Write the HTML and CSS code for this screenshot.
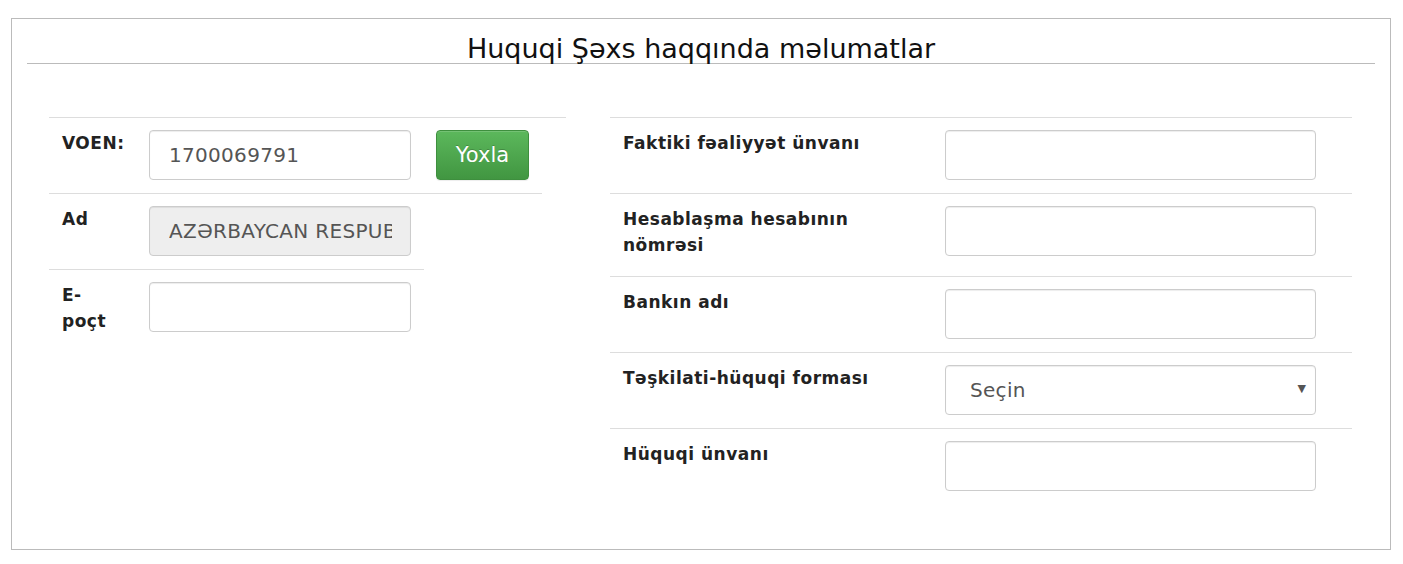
FILE: index.html
```html
<!DOCTYPE html>
<html>
<head>
  <meta charset="utf-8">
  <title>Huquqi Şəxs haqqında məlumatlar</title>
  <link rel="stylesheet" href="styles.css">
</head>
<body>
  <div class="panel">
    <h3 class="panel-title">Huquqi Şəxs haqqında məlumatlar</h3>

    <div class="columns">
      <!-- sol tərəf -->
      <div class="col-left">
        <div class="row row-line">
          <div class="cell label-cell"><label>VOEN:</label></div>
          <div class="cell"><input type="text" class="field" value="1700069791"></div>
          <div class="cell"><button type="button" class="btn-check">Yoxla</button></div>
        </div>
        <div class="row row-line">
          <div class="cell label-cell"><label>Ad</label></div>
          <div class="cell"><input type="text" class="field" value="AZƏRBAYCAN RESPUBLİKASI" disabled></div>
        </div>
        <div class="row">
          <div class="cell label-cell"><label>E-poçt</label></div>
          <div class="cell"><input type="text" class="field"></div>
        </div>
      </div>

      <!-- sağ tərəf -->
      <div class="col-right">
        <div class="rrow">
          <div class="rlabel"><label>Faktiki fəaliyyət ünvanı</label></div>
          <div class="rcell"><input type="text" class="field wide"></div>
        </div>
        <div class="rrow">
          <div class="rlabel"><label>Hesablaşma hesabının nömrəsi</label></div>
          <div class="rcell"><input type="text" class="field wide"></div>
        </div>
        <div class="rrow">
          <div class="rlabel"><label>Bankın adı</label></div>
          <div class="rcell"><input type="text" class="field wide"></div>
        </div>
        <div class="rrow">
          <div class="rlabel"><label>Təşkilati-hüquqi forması</label></div>
          <div class="rcell">
            <div class="select-wrap">
              <select class="field wide select">
                <option>Seçin</option>
              </select>
            </div>
          </div>
        </div>
        <div class="rrow">
          <div class="rlabel"><label>Hüquqi ünvanı</label></div>
          <div class="rcell"><input type="text" class="field wide"></div>
        </div>
      </div>
    </div>
  </div>
</body>
</html>
```

FILE: styles.css
```css
body{
  margin: 0;
  font-family: "DejaVu Sans", Verdana, sans-serif;
  color: #222;
  background: #fff;
}
.panel{
  margin: 18px 12px 0 11px;
  height: 532px;
  box-sizing: border-box;
  border: 1px solid #bbb;
  padding: 0 15px;
}
.panel-title{
  margin: 0;
  height: 28px;
  padding-top: 16px;
  border-bottom: 1px solid #bbb;
  font-size: 27px;
  font-weight: normal;
  line-height: 27px;
  text-align: center;
  color: #111;
}
.columns{
  display: flex;
  gap: 44px;
  padding: 53px 23px 0 22px;
}
.col-left{
  flex: 0 0 517px;
  border-top: 1px solid #ddd;
}
.col-right{
  flex: 1;
}

/* sol cədvəl */
.row{
  display: flex;
  width: fit-content;
}
.row-line{
  border-bottom: 1px solid #ddd;
}
.cell{
  padding: 12px 13px 13px 12px;
}
.label-cell{
  width: 50px;
  padding-left: 13px;
  padding-right: 25px;
}
label{
  display: block;
  font-size: 17px;
  font-weight: bold;
  letter-spacing: .5px;
  line-height: 26px;
  margin-bottom: 5px;
  color: #222;
}
.field{
  width: 262px;
  height: 50px;
  box-sizing: border-box;
  padding: 0 18px 0 19px;
  border: 1px solid #ccc;
  border-radius: 4px;
  box-shadow: inset 0 1px 1px rgba(0,0,0,.075);
  font-family: "DejaVu Sans", Verdana, sans-serif;
  font-size: 20px;
  letter-spacing: .3px;
  color: #555;
  background: #fff;
  outline: 0;
}
.field:disabled{
  background: #eee;
  color: #555;
}
.btn-check{
  width: 93px;
  height: 50px;
  border: 1px solid #3e8f3e;
  border-radius: 4px;
  background: linear-gradient(#5cb85c, #419641);
  color: #fff;
  font-family: "DejaVu Sans", Verdana, sans-serif;
  font-size: 21px;
  text-shadow: 0 -1px 0 rgba(0,0,0,.2);
  box-shadow: inset 0 1px 0 rgba(255,255,255,.15), 0 1px 1px rgba(0,0,0,.075);
  cursor: pointer;
}

/* sağ cədvəl */
.rrow{
  display: flex;
  border-top: 1px solid #ddd;
}
.rlabel{
  width: 260px;
  padding: 12px 50px 13px 13px;
}
.rcell{
  padding: 12px 36px 13px 12px;
}
.field.wide{
  width: 371px;
}
.select-wrap{
  position: relative;
}
.select{
  appearance: none;
  -webkit-appearance: none;
  padding-left: 24px;
}
.select-wrap::after{
  content: "\25BC";
  position: absolute;
  right: 10px;
  top: 17px;
  font-size: 11px;
  color: #555;
  pointer-events: none;
}
```
